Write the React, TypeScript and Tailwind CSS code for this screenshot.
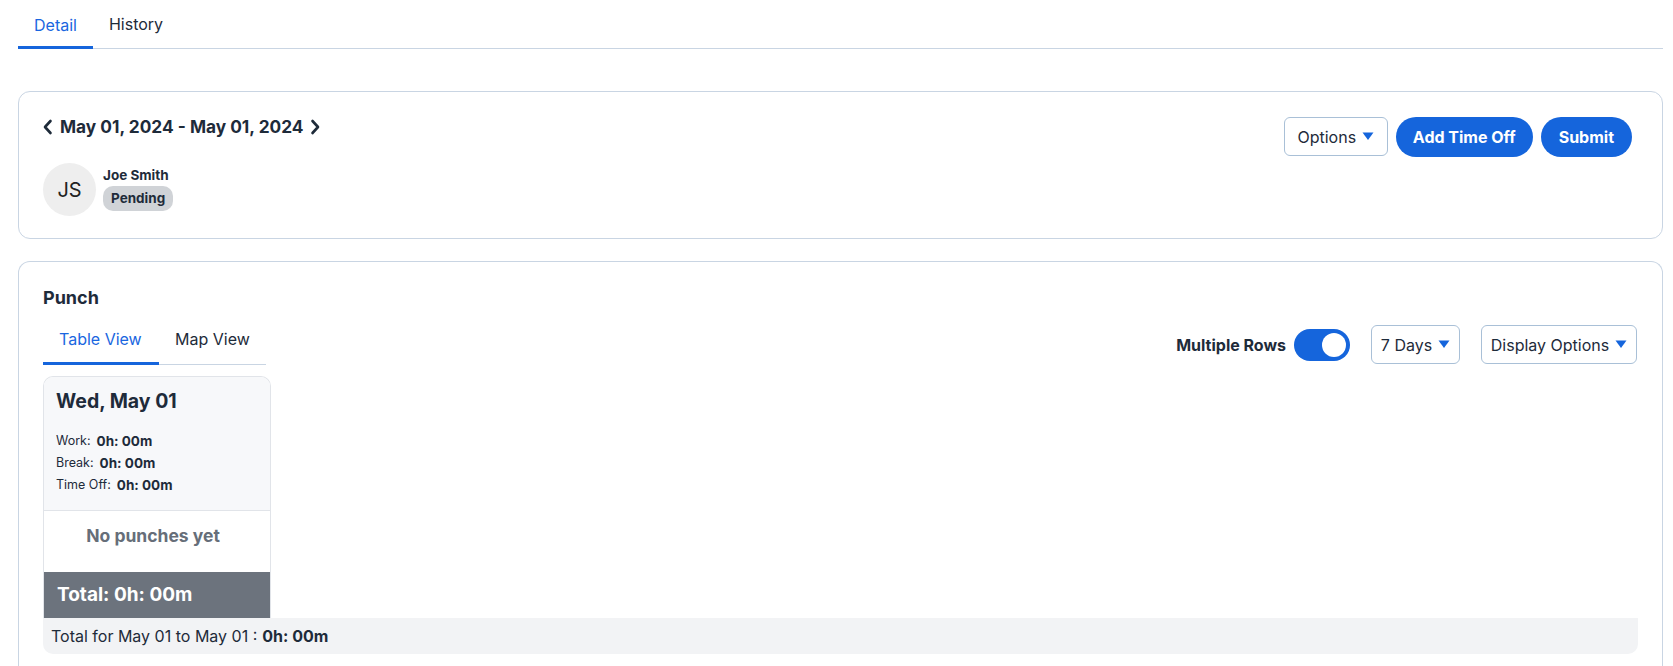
import React from 'react';

const Caret = () => (
  <svg width="12" height="9" viewBox="0 0 12 9" className="ml-[6px]">
    <path d="M0.5 0.5 L11.5 0.5 L6 8 Z" fill="#1565dc" />
  </svg>
);

const Chevron = ({ dir }: { dir: 'left' | 'right' }) => (
  <svg width="10" height="16" viewBox="0 0 10 16">
    <path
      d={dir === 'left' ? 'M7.5 2 L2 8 L7.5 14' : 'M2.5 2 L8 8 L2.5 14'}
      fill="none"
      stroke="#1e2b3a"
      strokeWidth="2.6"
      strokeLinecap="round"
      strokeLinejoin="round"
    />
  </svg>
);

const App = () => {
  const stats = [
    { label: 'Work:', value: '0h: 00m' },
    { label: 'Break:', value: '0h: 00m' },
    { label: 'Time Off:', value: '0h: 00m' }
  ];

  return (
    <div className="min-h-screen bg-white pl-[18px] pr-[10px] text-[#1e2b3a]" style={{ fontFamily: 'Inter, "Noto Sans", sans-serif' }}>
      {/* Top tabs */}
      <div className="flex h-[49px] border-b border-[#c9d5e3]">
        <div className="flex items-center px-[16px] text-[16px] text-[#1a66e0] border-b-[3px] border-[#1565dc] pt-[3px] -mb-[1px]">Detail</div>
        <div className="flex items-center px-[16px] text-[16px] text-[#1e2b3a] pb-[1px]">History</div>
      </div>

      {/* Header card */}
      <div className="mt-[42px] rounded-[12px] border border-[#c9d5e3] h-[148px] pl-[24px] pr-[30px] pt-[24px] flex justify-between">
        <div>
          <div className="flex items-center h-[22px]">
            <Chevron dir="left" />
            <span className="ml-[7px] mr-[6px] text-[17.3px] font-bold">May 01, 2024 - May 01, 2024</span>
            <Chevron dir="right" />
          </div>
          <div className="flex mt-[25px]">
            <div className="w-[53px] h-[53px] rounded-full bg-[#eeeeee] flex items-center justify-center text-[20px] text-[#222]">JS</div>
            <div className="ml-[7px] pt-[4px]">
              <div className="text-[13.5px] font-bold leading-[17px]">Joe Smith</div>
              <div className="mt-[2px] inline-flex items-center h-[25px] px-[8px] rounded-[10px] bg-[#d0d3d7] text-[13.5px] font-bold">Pending</div>
            </div>
          </div>
        </div>
        <div className="flex items-start gap-[8px] pt-[1px]">
          <button className="h-[39px] w-[104px] flex items-center justify-center rounded-[6px] border border-[#a9c0d7] text-[16px] text-[#1e2b3a]">
            Options<Caret />
          </button>
          <button className="h-[40px] px-[17px] rounded-full bg-[#1565dc] text-white text-[16px] font-bold">Add Time Off</button>
          <button className="h-[40px] px-[18px] rounded-full bg-[#1565dc] text-white text-[16px] font-bold">Submit</button>
        </div>
      </div>

      {/* Punch card */}
      <div className="mt-[22px] rounded-t-[12px] border border-b-0 border-[#c9d5e3] pl-[24px] pr-[24px] pt-[24px] pb-[20px]">
        <div className="text-[18px] font-bold leading-[24px]">Punch</div>
        <div className="flex justify-between items-end">
          <div className="flex w-[223px] h-[55px] border-b border-[#c9d5e3]">
            <div className="flex items-center px-[16px] pt-[6px] w-[116px] border-b-[3px] border-[#1565dc] -mb-[1px] text-[16px] text-[#1a66e0]">Table View</div>
            <div className="flex items-center px-[16px] pt-[4px] text-[16px] text-[#1e2b3a]">Map View</div>
          </div>
          <div className="flex items-center mb-[1px] pr-[1px]">
            <span className="text-[16px] font-bold">Multiple Rows</span>
            <div className="ml-[8px] w-[56px] h-[32px] rounded-full bg-[#1565dc] flex items-center justify-end pr-[4px]">
              <div className="w-[24px] h-[24px] rounded-full bg-white" />
            </div>
            <button className="ml-[21px] h-[39px] w-[89px] flex items-center justify-center rounded-[6px] border border-[#a9c0d7] text-[16px]">
              7 Days<Caret />
            </button>
            <button className="ml-[21px] h-[39px] w-[156px] flex items-center justify-center rounded-[6px] border border-[#a9c0d7] text-[16px]">
              Display Options<Caret />
            </button>
          </div>
        </div>

        {/* Day column */}
        <div className="mt-[11px] w-[228px] rounded-t-[10px] border border-b-0 border-[#e1e4e9] overflow-hidden">
          <div className="bg-[#f7f8fa] h-[134px] px-[12px] pt-[11px] border-b border-[#e1e4e9]">
            <div className="text-[19.5px] font-bold leading-[26px]">Wed, May 01</div>
            <div className="mt-[16px]">
              {stats.map((s, i) => (
                <div key={i} className="flex items-center h-[22px] text-[12.5px]">
                  {s.label}
                  <span className="ml-[6px] text-[13.5px] font-bold">{s.value}</span>
                </div>
              ))}
            </div>
          </div>
          <div className="h-[61px] flex justify-center pt-[12px] pr-[8px] text-[17.5px] font-bold text-[#666e79]">No punches yet</div>
          <div className="h-[46px] bg-[#6c737d] flex items-center pl-[13px] text-[19px] font-bold text-white">Total: 0h: 00m</div>
        </div>
        <div className="h-[36px] bg-[#f2f3f5] rounded-b-[10px] flex items-center pl-[8px] text-[16px]">
          Total for May 01 to May 01 :<span className="ml-[5px] font-bold">0h: 00m</span>
        </div>
      </div>
    </div>
  );
};

export default App;
